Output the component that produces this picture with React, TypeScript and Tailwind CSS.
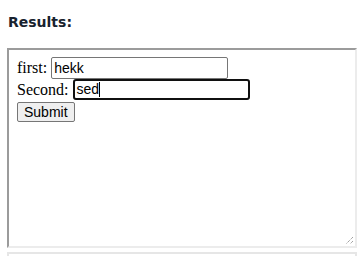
import React from "react";

function ResizeGrip() {
  return (
    <svg width="10" height="10" viewBox="0 0 10 10" className="absolute bottom-[1px] right-[1px]">
      <line x1="9" y1="2" x2="2" y2="9" stroke="#7a7a7a" strokeWidth="1" strokeDasharray="1 1" />
      <line x1="9" y1="6" x2="6" y2="9" stroke="#7a7a7a" strokeWidth="1" strokeDasharray="1 1" />
    </svg>
  );
}

export default function App() {
  return (
    <div className="w-[360px] h-[256px] overflow-hidden bg-white px-[7px] pt-[14px]">
      <h3 className="text-[14px] leading-[17px] font-bold text-[#18222e] pl-[1px]" style={{ fontFamily: '"DejaVu Sans", Verdana, sans-serif' }}>
        Results:
      </h3>
      {/* framed result panel */}
      <div className="relative mt-[17px] w-[350px] h-[200px] border-2 border-t-[#9b9b9b] border-l-[#9b9b9b] border-b-[#ececec] border-r-[#ececec] bg-white">
        <div className="p-[8px] pt-[7px] text-[16px] text-black" style={{ fontFamily: '"Liberation Serif", "Times New Roman", serif' }}>
          <div className="flex items-center h-[22px]">
            <span>first:</span>
            <input
              readOnly
              value="hekk"
              className="ml-[4px] w-[177px] h-[22px] border border-[#767676] rounded-[2px] px-[2px] text-[14px] text-black outline-none"
              style={{ fontFamily: '"Liberation Sans", Arial, sans-serif' }}
            />
          </div>
          <div className="flex items-center h-[21px]">
            <span>Second:</span>
            <div
              className="ml-[4px] w-[177px] h-[21px] border-2 border-[#101010] rounded-[3px] px-[2px] flex items-center text-[14px] text-black"
              style={{ fontFamily: '"Liberation Sans", Arial, sans-serif' }}
            >
              <span>sed</span>
              <span className="w-[1px] h-[15px] bg-black" />
            </div>
          </div>
          <button
            className="h-[20px] px-[6px] border border-[#767676] rounded-[2px] bg-[#efefef] text-[14px] text-black leading-none"
            style={{ fontFamily: '"Liberation Sans", Arial, sans-serif' }}
          >
            Submit
          </button>
        </div>
        <ResizeGrip />
      </div>
      <div className="mt-[4px] w-[350px] h-[20px] border-2 border-[#e6e6e6]" />
    </div>
  );
}
